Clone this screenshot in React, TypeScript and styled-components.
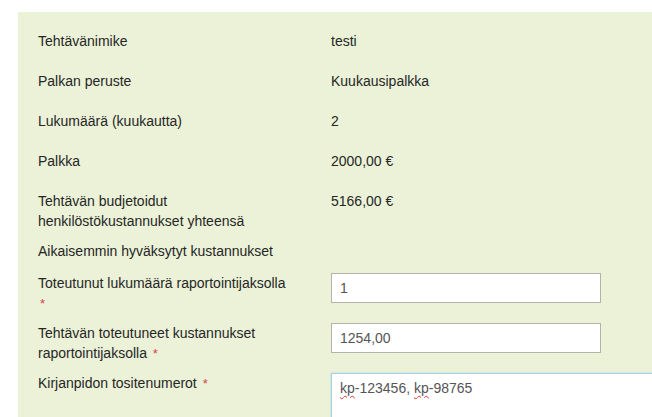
import React from 'react';
import styled, { createGlobalStyle } from 'styled-components';

const GlobalStyle = createGlobalStyle`
  html, body {
    margin: 0;
    padding: 0;
    background: #ffffff;
    overflow: hidden;
  }
  body {
    font-family: "Liberation Sans", Arial, sans-serif;
    font-size: 14px;
    color: #333333;
  }
`;

const Page = styled.div`
  padding: 12px 0 0 18px;
  width: 760px;
`;

const Panel = styled.div`
  background-color: #ebf2d8;
  padding: 19px 20px 40px 20px;
  min-height: 420px;
`;

const Row = styled.div`
  display: grid;
  grid-template-columns: 252px 1fr;
  column-gap: 41px;
  margin-bottom: 10px;
  align-items: start;
`;

const Label = styled.div`
  line-height: 20px;
  color: #262626;
`;

const Required = styled.span`
  color: #d9434f;
  font-size: 13px;
  line-height: 1;
  margin-left: 2px;
`;

const Value = styled.div<{ $empty?: boolean }>`
  min-height: ${(p) => (p.$empty ? '22px' : '30px')};
  line-height: 20px;
  color: #262626;
`;

const Input = styled.input`
  box-sizing: border-box;
  width: 270px;
  height: 30px;
  border: 1px solid #b3b3ab;
  padding: 0 8px;
  font-family: "Liberation Sans", Arial, sans-serif;
  font-size: 14px;
  color: #555555;
  background: #ffffff;
  outline: none;
`;

const TextArea = styled.div`
  box-sizing: border-box;
  width: 400px;
  height: 90px;
  border: 1px solid #a9cfe0;
  box-shadow: 0 0 2px rgba(102, 175, 233, 0.4);
  padding: 4px 8px;
  font-size: 14px;
  line-height: 20px;
  color: #555555;
  background: #ffffff;
  outline: none;
`;

const Misspelled = styled.span`
  text-decoration: underline wavy #e0342c;
  text-decoration-thickness: 1px;
  text-underline-offset: 2px;
`;

type Item = {
  label: string;
  value?: string;
};

const staticRows: Item[] = [
  { label: 'Tehtävänimike', value: 'testi' },
  { label: 'Palkan peruste', value: 'Kuukausipalkka' },
  { label: 'Lukumäärä (kuukautta)', value: '2' },
  { label: 'Palkka', value: '2000,00 €' },
  { label: 'Tehtävän budjetoidut henkilöstökustannukset yhteensä', value: '5166,00 €' },
];

const RequiredMark = () => <Required>*</Required>;

export default function App() {
  return (
    <>
      <GlobalStyle />
      <Page>
        <Panel>
          {staticRows.map((row) => (
            <Row key={row.label}>
              <Label>{row.label}</Label>
              <Value>{row.value}</Value>
            </Row>
          ))}

          <Row>
            <Label>Aikaisemmin hyväksytyt kustannukset</Label>
            <Value $empty />
          </Row>

          <Row>
            <Label>
              Toteutunut lukumäärä raportointijaksolla <RequiredMark />
            </Label>
            <Input defaultValue="1" />
          </Row>

          <Row>
            <Label>
              Tehtävän toteutuneet kustannukset raportointijaksolla <RequiredMark />
            </Label>
            <Input defaultValue="1254,00" />
          </Row>

          <Row>
            <Label>
              Kirjanpidon tositenumerot <RequiredMark />
            </Label>
            <TextArea role="textbox" aria-multiline="true">
              <Misspelled>kp</Misspelled>-123456, <Misspelled>kp</Misspelled>-98765
            </TextArea>
          </Row>
        </Panel>
      </Page>
    </>
  );
}
